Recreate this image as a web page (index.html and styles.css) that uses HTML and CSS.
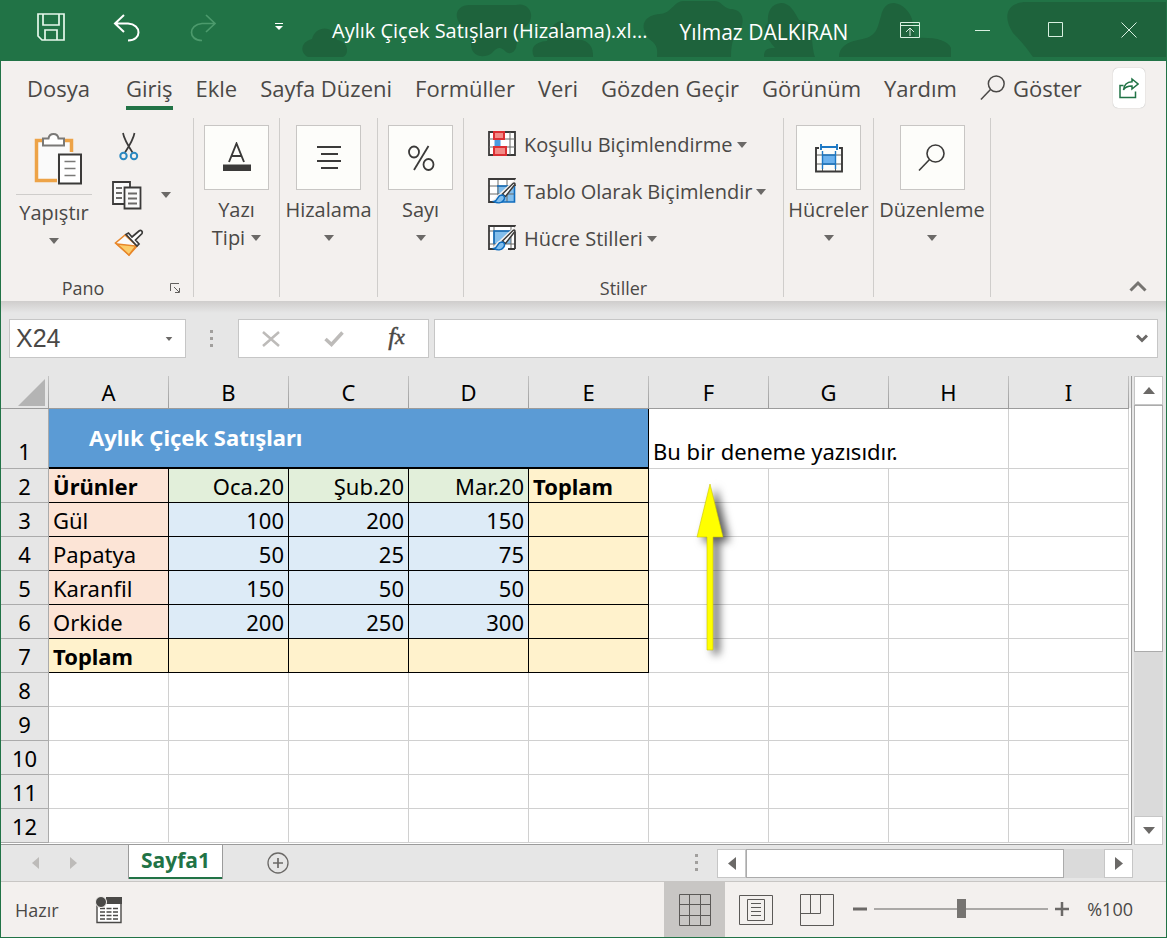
FILE: index.html
```
<!DOCTYPE html>
<html lang="tr">
<head>
<meta charset="utf-8">
<title>Aylık Çiçek Satışları (Hizalama)</title>
<link rel="stylesheet" href="styles.css">
</head>
<body>
<svg class="defs" aria-hidden="true">
  <symbol id="caret" viewBox="0 0 10 6"><path d="M0 0h10L5 6z" fill="currentColor"/></symbol>
  <symbol id="lens" viewBox="0 0 28 28"><g fill="none" stroke="currentColor" stroke-width="1.6"><circle cx="17.5" cy="9.5" r="8.5"/><path d="M11.3 15.7 1 26.5"/></g></symbol>
  <symbol id="brush" viewBox="0 0 28 28"><path d="M8 25.500C12 26 16 25 17.500 20L28 7V2L24 5 11 17C8 18 8 22 4 23z" fill="#f3f0ee"/><path d="M14.500 17 25 6.500c1.500-1 2.500 0 1.500 1.500L17.500 19.500z" fill="#fff" stroke="#3b3a39" stroke-width="1.500"/><path d="M6 24.500c4-.5 3-6 7.500-6.500 3 0 4 3 2 5.500-2 2.500-6 3-9.500 1z" fill="#83beec" stroke="#0f6cbd" stroke-width="1.500"/></symbol>
</svg>
<div class="window">
  <header class="titlebar">
    <svg class="clouds" viewBox="0 0 1167 61" preserveAspectRatio="xMaxYMin slice" aria-hidden="true">
      <g fill="#1e633c">
        <path d="M309 57c-8-4-8-15 4-18 4-14 22-14 25 1 11 1 13 14 6 17z"/>
        <path d="M462 25c-9-10-3-21 10-20h45c11-3 18 7 14 16-4 8-12 8-12 15l-2 12c-3 7-9 6-12 2-6-4-8-1-12 3-8 6-21 4-21-9 0-7-2-12-10-19z"/>
        <path d="M535 57c-4-9 0-15 13-16 3-9 4-18 14-20 9 1 9 12 14 19 12-2 19 6 18 17z"/>
        <path d="M658 57c1-10-1-13-8-18-11-14-4-24 11-25 12-1 13-12 23-13h31c8 0 9 7 16 8 12 0 15 10 11 19-6 6-10 12-10 29z"/>
        <path d="M765 57c0-7 2-9 11-9-10-12-13-20-7-25-1-11 3-19 13-20 9 0 13 8 18 17 9 0 13 4 13 13 0 10 1 19 3 24z"/>
        <path d="M840 57c0-9 7-15 19-17 20-3 19-12 23-24 2-9 6-13 13-13 9 1 15 8 18 16l3 19c19-1 33 2 36 10v9z"/>
        <path d="M1034 57c-5-7-11-15-20-24-11-17-6-31 14-31h139v55z"/>
      </g>
    </svg>
    <div class="quick">
      <button class="tb" aria-label="Kaydet"><svg width="30" height="30" viewBox="0 0 30 30" fill="none" stroke="#e6f8ec" stroke-width="1.700"><path d="M2 2h26v26H6l-4-4zM7 2v11h16V2M9 28V18h12v10"/></svg></button>
      <button class="tb" aria-label="Geri al"><svg width="28" height="30" viewBox="0 0 28 30" fill="none" stroke="#fff" stroke-width="2"><path d="M11 3 2 11.500l9 8.500M2 11.500h13c14 1 14 17 0 17"/></svg></button>
      <button class="tb dim" aria-label="Yinele"><svg width="28" height="30" viewBox="0 0 28 30" fill="none" stroke="#4c9a6c" stroke-width="1.700"><path d="M17 3l9 8.500-9 8.500M26 11.500H13c-14 1-14 17 0 17"/></svg></button>
      <button class="tb" aria-label="Özelleştir"><svg width="10" height="8" viewBox="0 0 10 8" fill="#fff"><path d="M1 0h8v1H1zM1 3h8L5 7z"/></svg></button>
    </div>
    <h1 class="doc">Aylık Çiçek Satışları (Hizalama).xl...</h1>
    <span class="user">Yılmaz DALKIRAN</span>
    <div class="winctl">
      <button class="tb" aria-label="Şerit görüntüleme"><svg width="20" height="16" viewBox="0 0 20 16" fill="none" stroke="#d9f0e1"><path d="M.5.500h19v15H.5zM.5 3.500h19M10 14V6M6 10l4-4 4 4"/></svg></button>
      <button class="tb" aria-label="Simge durumuna küçült"><svg width="16" height="16" viewBox="0 0 16 16" stroke="#d9f0e1"><path d="M0 8.500h15"/></svg></button>
      <button class="tb" aria-label="Ekranı kapla"><svg width="16" height="16" viewBox="0 0 16 16" fill="none" stroke="#d9f0e1"><path d="M.5.500h14v14H.5z"/></svg></button>
      <button class="tb" aria-label="Kapat"><svg width="16" height="16" viewBox="0 0 16 16" stroke="#d9f0e1"><path d="M.5.500l15 15M15.500.500l-15 15"/></svg></button>
    </div>
  </header>

  <nav class="tabs">
    <button class="tab file">Dosya</button>
    <button class="tab active">Giriş</button>
    <button class="tab">Ekle</button>
    <button class="tab">Sayfa Düzeni</button>
    <button class="tab">Formüller</button>
    <button class="tab">Veri</button>
    <button class="tab">Gözden Geçir</button>
    <button class="tab">Görünüm</button>
    <button class="tab">Yardım</button>
    <button class="tab tell"><svg width="26" height="26"><use href="#lens"/></svg>Göster</button>
    <button class="share" aria-label="Paylaş"><svg width="20" height="22" viewBox="0 0 20 22" fill="none" stroke="#217346" stroke-width="1.500"><path d="M4.500 8.500H1v12h15.500v-6M13 2l6 5-6 5V9C9 9 6 10 4.500 13 5 8 8 5 13 4.800z"/></svg></button>
  </nav>

  <section class="ribbon">
    <div class="group pano">
      <div class="body">
        <button class="paste">
          <span class="pasteicon"><svg width="50" height="54" viewBox="0 0 50 54"><path d="M3.500 8.500h35v14h-14v25h-21z" fill="#fafafa"/><path d="M10 8.500H3.500v40H24M32 8.500h6.500V20" fill="none" stroke="#eda347" stroke-width="3.500"/><path d="M10 13.500V6.500h5.500c1-6 9-6 10 0H31v7z" fill="#fff" stroke="#7a7977" stroke-width="2"/><path d="M26 22.500h22v29H26z" fill="#fff" stroke="#3b3a39" stroke-width="2"/><path d="M31.500 29.500h11M31.500 36.500h11M31.500 43.500h11" stroke="#7a7977" stroke-width="1.500"/></svg></span>
          <span class="pastetext">Yapıştır</span>
          <svg class="caret"><use href="#caret"/></svg>
        </button>
        <div class="clip">
          <button aria-label="Kes"><svg width="20" height="30" viewBox="0 0 20 30" fill="none"><path d="M4 1c1 6 4 11 9.500 19.500M15.500 1c-1 6-4 11-9.500 19.500" stroke="#3b3a39" stroke-width="1.700"/><circle cx="4.500" cy="24" r="3.200" stroke="#2b88c0" stroke-width="2"/><circle cx="15" cy="24" r="3.200" stroke="#2b88c0" stroke-width="2"/></svg></button>
          <span></span>
          <button aria-label="Kopyala"><svg width="30" height="30" viewBox="0 0 30 30" fill="#fafafa" stroke="#3b3a39" stroke-width="1.800"><path d="M10 24H-1V2h17v5"/><path d="M10.500 7.500h16v21h-16z"/><path d="M2 8h6M2 13h6M2 18h6M14 13.500h9M14 18.500h9M14 23.500h9" stroke="#6b6a68"/></svg></button>
          <button aria-label="Kopyalama seçenekleri"><svg class="caret"><use href="#caret"/></svg></button>
          <button aria-label="Biçim boyacısı"><svg width="30" height="28" viewBox="0 0 30 28"><path d="M11 6 1.500 14 15 26l8-9z" fill="#fafafa" stroke="#e8872a" stroke-width="1.600"/><path d="M3 15l19 2-7 9z" fill="#fbcd6b" stroke="#e8872a" stroke-width="1.400"/><path d="M12 5.500 23 17l2-2-3.500-4L28 4.500c1-2-1-4-3-2.500L18 8l-3.500-4z" fill="#fff" stroke="#3b3a39" stroke-width="1.700"/></svg></button>
        </div>
      </div>
      <div class="foot"><span>Pano</span><button class="launch" aria-label="Pano ayarları"><svg width="10" height="10" viewBox="0 0 10 10" fill="none" stroke="#605e5c"><path d="M.5 8V.500H9M4 4l5 5M9.500 5v4.500H5"/></svg></button></div>
    </div>
    <div class="group font">
      <button class="big"><span class="tile"><svg width="30" height="32" viewBox="0 0 30 32"><path d="M7 20 14.500 1.500 22 20M9.500 14h10" fill="none" stroke="#3b3a39" stroke-width="1.900"/><path d="M1 22.500h28V29H1z" fill="#3b3a39"/></svg></span><span>Yazı</span><span>Tipi <svg class="caret"><use href="#caret"/></svg></span></button>
    </div>
    <div class="group align">
      <button class="big"><span class="tile"><svg width="26" height="26" viewBox="0 0 26 26" stroke="#3b3a39" stroke-width="2"><path d="M1 2h24M5 9h17M1 16h24M5 23h17"/></svg></span><span>Hizalama</span><span><svg class="caret"><use href="#caret"/></svg></span></button>
    </div>
    <div class="group number">
      <button class="big"><span class="tile"><svg width="28" height="28" viewBox="0 0 28 28" fill="none" stroke="#3b3a39" stroke-width="1.800"><ellipse cx="7" cy="8" rx="5" ry="5.500"/><ellipse cx="21.500" cy="20.500" rx="5" ry="5.500"/><path d="M21.500 2 7 26"/></svg></span><span>Sayı</span><span><svg class="caret"><use href="#caret"/></svg></span></button>
    </div>
    <div class="group styles">
      <div class="body list">
        <button class="line"><svg width="28" height="28" viewBox="0 0 28 28"><path d="M1 2h26v23H1z" fill="#fff" stroke="#3b3a39" stroke-width="1.800"/><path d="M1 9h26M1 17h26M8 2v23M22 2v23" stroke="#6b6a68" fill="none"/><path d="M6.500 9.500h6v7h-6z" fill="#4a9be0"/><path d="M6 2h10v7H6zM6 17h12v8H6z" fill="#f28b87" stroke="#dc2f33" stroke-width="2"/></svg>Koşullu Biçimlendirme<svg class="caret"><use href="#caret"/></svg></button>
        <button class="line"><svg width="28" height="28" viewBox="0 0 28 28"><path d="M1 2h26v23H1z" fill="#fff"/><path d="M9 9h18v16H9z" fill="#83beec"/><path d="M1 9h26M1 17h26M10 2v23M19 2v23" stroke="#6b6a68" fill="none"/><path d="M9 9h17.500v16H9" fill="none" stroke="#0f6cbd" stroke-width="1.600"/><path d="M27 9V2H1v23h6" fill="none" stroke="#3b3a39" stroke-width="1.800"/><use href="#brush"/></svg>Tablo Olarak Biçimlendir<svg class="caret"><use href="#caret"/></svg></button>
        <button class="line"><svg width="28" height="28" viewBox="0 0 28 28"><path d="M1 2h26v23H1z" fill="#fff"/><path d="M6 7h17v13H6z" fill="#83beec"/><path d="M1 7h26M1 20h26M6 2v23M23 2v23" stroke="#6b6a68" fill="none"/><path d="M6 20V7h17" fill="none" stroke="#0f6cbd" stroke-width="1.600"/><path d="M27 25V2H1v23h6M20 25h7" fill="none" stroke="#3b3a39" stroke-width="1.800"/><use href="#brush"/></svg>Hücre Stilleri<svg class="caret"><use href="#caret"/></svg></button>
      </div>
      <div class="foot"><span>Stiller</span></div>
    </div>
    <div class="group cells">
      <button class="big"><span class="tile"><svg width="30" height="30" viewBox="0 0 30 30" fill="none"><path d="M8 12h13v10H8z" fill="#6cb2ee"/><path d="M2 12h26M2 21h26M8.500 8v21M21.500 8v21" stroke="#5f5e5c"/><path d="M8.500 8v18M21.500 8v18M8 12h13M8 21h13" stroke="#1c78c4" stroke-width="1.400"/><path d="M5 5H2v23.500h26V5h-3" stroke="#3b3a39" stroke-width="1.900"/><path d="M7 4h16M7 1v6M23 1v6" stroke="#1c78c4" stroke-width="1.900"/></svg></span><span>Hücreler</span><span><svg class="caret"><use href="#caret"/></svg></span></button>
    </div>
    <div class="group edit">
      <button class="big"><span class="tile"><svg width="28" height="28" color="#3b3a39"><use href="#lens"/></svg></span><span>Düzenleme</span><span><svg class="caret"><use href="#caret"/></svg></span></button>
    </div>
    <button class="collapse" aria-label="Şeridi daralt"><svg width="18" height="12" viewBox="0 0 18 12" fill="none" stroke="#767471" stroke-width="3"><path d="M1.500 10.500 9 3l7.500 7.500"/></svg></button>
  </section>

  <section class="formula">
    <div class="namebox"><input type="text" value="X24" aria-label="Ad Kutusu"><button aria-label="Ad listesi"><svg class="caret small"><use href="#caret"/></svg></button></div>
    <svg class="grip" width="4" height="18" viewBox="0 0 4 18" fill="#a19f9d"><path d="M0 0h3v3H0zM0 7h3v3H0zM0 14h3v3H0z"/></svg>
    <div class="fx">
      <button aria-label="İptal"><svg width="18" height="16" viewBox="0 0 18 16" stroke="#bdbbb9" stroke-width="2.500"><path d="M1 1l16 14M17 1 1 15"/></svg></button>
      <button aria-label="Gir"><svg width="20" height="16" viewBox="0 0 20 16" fill="none" stroke="#bdbbb9" stroke-width="3.500"><path d="M1.500 8 7.500 13.500 18.500 1.500"/></svg></button>
      <button class="fn" aria-label="İşlev Ekle">f<sub>x</sub></button>
    </div>
    <div class="entry"><input type="text" aria-label="Formül Çubuğu"><button aria-label="Genişlet"><svg width="12" height="9" viewBox="0 0 12 9" fill="none" stroke="#6b6967" stroke-width="3"><path d="M1 1.500 6 6.500l5-5"/></svg></button></div>
  </section>

  <main class="work">
    <div class="sheet">
      <table>
        <colgroup><col class="rowcol"><col span="9" class="datacol"></colgroup>
        <thead><tr><th class="corner"><svg width="27" height="27" viewBox="0 0 27 27"><path d="M27 0v27H0z" fill="#b4b4b4"/></svg></th><th>A</th><th>B</th><th>C</th><th>D</th><th>E</th><th>F</th><th>G</th><th>H</th><th>I</th></tr></thead>
        <tbody>
          <tr class="tall"><th>1</th><td colspan="5" class="title">Aylık Çiçek Satışları</td><td colspan="3">Bu bir deneme yazısıdır.</td><td></td></tr>
          <tr><th>2</th><td class="peach bold">Ürünler</td><td class="green num">Oca.20</td><td class="green num">Şub.20</td><td class="green num">Mar.20</td><td class="cream bold">Toplam</td><td></td><td></td><td></td><td></td></tr>
          <tr><th>3</th><td class="peach">Gül</td><td class="blue num">100</td><td class="blue num">200</td><td class="blue num">150</td><td class="cream"></td><td></td><td></td><td></td><td></td></tr>
          <tr><th>4</th><td class="peach">Papatya</td><td class="blue num">50</td><td class="blue num">25</td><td class="blue num">75</td><td class="cream"></td><td></td><td></td><td></td><td></td></tr>
          <tr><th>5</th><td class="peach">Karanfil</td><td class="blue num">150</td><td class="blue num">50</td><td class="blue num">50</td><td class="cream"></td><td></td><td></td><td></td><td></td></tr>
          <tr><th>6</th><td class="peach">Orkide</td><td class="blue num">200</td><td class="blue num">250</td><td class="blue num">300</td><td class="cream"></td><td></td><td></td><td></td><td></td></tr>
          <tr><th>7</th><td class="cream bold">Toplam</td><td class="cream"></td><td class="cream"></td><td class="cream"></td><td class="cream"></td><td></td><td></td><td></td><td></td></tr>
          <tr><th>8</th><td></td><td></td><td></td><td></td><td></td><td></td><td></td><td></td><td></td></tr>
          <tr><th>9</th><td></td><td></td><td></td><td></td><td></td><td></td><td></td><td></td><td></td></tr>
          <tr><th>10</th><td></td><td></td><td></td><td></td><td></td><td></td><td></td><td></td><td></td></tr>
          <tr><th>11</th><td></td><td></td><td></td><td></td><td></td><td></td><td></td><td></td><td></td></tr>
          <tr><th>12</th><td></td><td></td><td></td><td></td><td></td><td></td><td></td><td></td><td></td></tr>
        </tbody>
      </table>
      <svg class="arrow" width="60" height="190" viewBox="0 0 60 190" aria-hidden="true"><path d="M20 4l13 53H23v113h-6V57H7z" fill="#ff0" stroke="#c9c400" stroke-width=".6"/></svg>
    </div>
    <div class="vscroll">
      <button aria-label="Yukarı"><svg width="12" height="7" viewBox="0 0 12 7" fill="#6b6967"><path d="M0 7h12L6 0z"/></svg></button>
      <div class="vthumb"></div>
      <div class="space"></div>
      <button aria-label="Aşağı"><svg width="12" height="7" viewBox="0 0 12 7" fill="#6b6967"><path d="M0 0h12L6 7z"/></svg></button>
    </div>
  </main>

  <div class="sheetbar">
    <div class="sheetnav">
      <button aria-label="Önceki"><svg width="7" height="12" viewBox="0 0 7 12" fill="#bdbbb9"><path d="M7 0v12L0 6z"/></svg></button>
      <button aria-label="Sonraki"><svg width="7" height="12" viewBox="0 0 7 12" fill="#bdbbb9"><path d="M0 0v12l7-6z"/></svg></button>
    </div>
    <button class="sheettab">Sayfa1</button>
    <button class="add" aria-label="Yeni sayfa"><svg width="22" height="22" viewBox="0 0 22 22" fill="none" stroke="#6b6967"><circle cx="11" cy="11" r="10" stroke-width="1.300"/><path d="M11 6v10M6 11h10" stroke-width="1.700"/></svg></button>
    <svg class="grip end" width="4" height="18" viewBox="0 0 4 18" fill="#a19f9d"><path d="M0 0h3v3H0zM0 7h3v3H0zM0 14h3v3H0z"/></svg>
    <div class="hscroll">
      <button aria-label="Sola"><svg width="8" height="13" viewBox="0 0 8 13" fill="#6b6967"><path d="M8 0v13L0 6.500z"/></svg></button>
      <div class="hthumb"></div>
      <div class="space"></div>
      <button aria-label="Sağa"><svg width="8" height="13" viewBox="0 0 8 13" fill="#6b6967"><path d="M0 0v13l8-6.500z"/></svg></button>
    </div>
  </div>

  <footer class="status">
    <span class="ready">Hazır</span>
    <button class="macro" aria-label="Makro kaydet"><svg width="28" height="28" viewBox="0 0 28 28"><path d="M2 9v17.500h24V2H12" fill="#fff" stroke="#4a4947" stroke-width="1.400"/><path d="M11 1h16v7H11z" fill="#4a4947"/><path d="M5 12.500h18M5 16h18M5 19.500h18M5 23h18" stroke="#4a4947" stroke-width="1.400" stroke-dasharray="5 1.500"/><circle cx="6" cy="6" r="5.500" fill="#4a4947" stroke="#f3f0ee"/></svg></button>
    <div class="views">
      <button class="on" aria-label="Normal"><svg width="32" height="32" viewBox="0 0 32 32" fill="none" stroke="#5b5957"><path d="M.5.500h31v31H.5zM10.500.500v31M21.500.500v31M.5 10.500h31M.5 21.500h31"/></svg></button>
      <button aria-label="Sayfa Düzeni"><svg width="34" height="30" viewBox="0 0 34 30" fill="none" stroke="#5b5957"><path d="M.5.500h33v29H.5zM8.500 4.500h17v21h-17zM12 8.500h10M12 12.500h10M12 16.500h10M12 20.500h10"/></svg></button>
      <button aria-label="Sayfa Sonu Önizleme"><svg width="34" height="32" viewBox="0 0 34 32" fill="none" stroke="#5b5957"><path d="M.5.500h33v31H.5zM10.500.500v19M20.500.500v19H.5"/></svg></button>
    </div>
    <div class="zoom">
      <button aria-label="Uzaklaştır"><svg width="16" height="16" viewBox="0 0 16 16" stroke="#6b6967" stroke-width="3"><path d="M1 8h14"/></svg></button>
      <input type="range" min="0" max="100" value="50" aria-label="Yakınlaştırma">
      <button aria-label="Yakınlaştır"><svg width="16" height="16" viewBox="0 0 16 16" stroke="#6b6967" stroke-width="2.500"><path d="M1 8h14M8 1v14"/></svg></button>
      <span class="pct">%100</span>
    </div>
  </footer>
</div>
</body>
</html>
```
FILE: styles.css
```
* { box-sizing: border-box; }
body { margin: 0; font-family: "Open Sans", "Noto Sans", sans-serif; color: #4a4846; }
button, input { font: inherit; color: inherit; }
button { margin: 0; padding: 0; border: 0; background: none; display: flex; align-items: center; justify-content: center; white-space: nowrap; }
svg { display: block; flex: none; }
.defs { position: absolute; width: 0; height: 0; }
.window { display: flex; flex-direction: column; min-height: 100vh; border: solid #217346; border-width: 0 1px 1px; background: #e6e6e6; }
.caret { display: inline-block; width: 10px; height: 6px; color: #6b6967; vertical-align: middle; }

/* title bar */
.titlebar { position: relative; display: flex; align-items: center; height: 61px; background: #217346; color: #fff; overflow: hidden; }
.clouds { position: absolute; top: 0; right: 0; width: 100%; height: 61px; }
.titlebar > :not(.clouds) { position: relative; }
.quick { display: flex; width: 331px; padding: 0 2px 8px 12px; }
.quick .tb { width: 76px; height: 48px; flex: none; }
.doc { margin: 0; font-size: 20px; font-weight: 400; white-space: nowrap; }
.user { margin-left: 32px; padding-top: 2px; font-size: 21px; white-space: nowrap; }
.winctl { display: flex; margin-left: auto; padding: 0 1px 2px 0; }
.winctl .tb { width: 73px; height: 56px; }

/* tabs */
.tabs { display: flex; align-items: center; gap: 23px; height: 54px; padding: 0 21px 0 26px; background: #f3f0ee; font-size: 22px; }
.tab { height: 44px; padding: 5px 0 1px; border-bottom: 4px solid transparent; line-height: 34px; }
.tab.file { margin-right: 13px; }
.tab.active { border-bottom-color: #217346; }
.tab.tell { gap: 7px; }
.share { width: 32px; height: 40px; margin-left: auto; border-radius: 5px; background: #fff; box-shadow: 0 0 1px #999; }

/* ribbon */
.ribbon { display: flex; height: 186px; padding: 3px 0 4px; background: #f3f0ee; font-size: 20px; }
.group { display: flex; flex-direction: column; border-right: 1px solid #cfcdcb; }
.body { display: flex; flex: 1; padding-top: 7px; }
.foot { display: flex; justify-content: center; align-items: center; height: 18px; font-size: 18px; line-height: 18px; }
.pano { width: 193px; }
.font, .number { width: 86px; }
.align { width: 98px; }
.styles { width: 320px; }
.cells { width: 90px; }
.edit { width: 117px; }
.pano .foot { display: grid; grid-template-columns: 1fr 20px; padding-right: 8px; text-align: center; }
.paste { flex-direction: column; justify-content: flex-start; width: 76px; margin-left: 15px; }
.pasteicon { display: flex; justify-content: center; width: 76px; height: 70px; padding: 7px 0 0 8px; border-bottom: 1px solid #cfcdcb; }
.pastetext { line-height: 36px; }
.paste .caret { margin-top: 7px; }
.body .clip { display: grid; grid-template-columns: 46px 28px; grid-auto-rows: 48px; margin: -2px 0 0 14px; }
.clip svg { overflow: visible; }
.big { flex-direction: column; justify-content: flex-start; padding-top: 7px; line-height: 28px; }
.big > span { min-height: 28px; display: flex; align-items: center; gap: 6px; }
.big > .tile { width: 65px; height: 65px; margin-bottom: 6px; justify-content: center; border: 1px solid #c8c6c4; background: #fdfdfa; }
.list { flex-direction: column; align-items: flex-start; padding: 3px 0 0 24px; }
.line { height: 47px; gap: 8px; }
.line > svg:first-child { margin-bottom: 2px; }
.line .caret { margin-left: -4px; }
.collapse { margin: auto 19px 5px auto; }

/* formula bar */
.formula { display: flex; align-items: center; height: 75px; padding: 0 8px; background: linear-gradient(#cfcdcc, #e6e6e6 12px); }
.namebox, .fx, .entry { display: flex; height: 39px; border: 1px solid #c6c6c6; background: #fff; }
.namebox { width: 177px; }
.namebox input, .entry input { flex: 1; min-width: 0; padding: 0 6px; border: 0; background: none; }
.namebox input { font-family: "Liberation Sans", Arial, sans-serif; font-size: 25px; }
.namebox button { width: 32px; }
.caret.small { width: 8px; height: 4px; }
.grip { margin: 0 24px; }
.fx { width: 191px; }
.fx button { flex: 1; }
.fx .fn { font-family: "Liberation Serif", serif; font-style: italic; font-size: 25px; line-height: 30px; color: #4a4846; -webkit-text-stroke: 0.5px; padding-bottom: 3px; }
.fn sub { font-size: 22px; vertical-align: baseline; }
.entry { flex: 1; margin-left: 5px; }
.entry button { width: 30px; }

/* sheet */
.work { display: flex; flex: 1; min-height: 0; }
.sheet { position: relative; flex: 1; min-width: 0; margin-right: 2px; overflow: hidden; border: solid #9b9b9b; border-width: 0 1px 1px 0; background: linear-gradient(#e6e6e6 32px, #fff 32px); }
table { table-layout: fixed; width: 1128px; border-collapse: separate; border-spacing: 0; font: 22px/30px "Noto Sans", "Open Sans", sans-serif; color: #000; }
.rowcol { width: 48px; }
.datacol { width: 120px; }
th { padding: 0 0 1px; border: solid #ababab; border-width: 0 1px 1px 0; background: #e6e6e6; font-weight: 400; vertical-align: bottom; }
thead th { height: 33px; border-color: #9b9b9b; border-image: linear-gradient(#c4c4c4, #9b9b9b) 1; }
.corner svg { margin: 0 3px 1px auto; }
td { height: 34px; padding: 0 4px 1px; border: solid #d0d0d0; border-width: 0 1px 1px 0; vertical-align: bottom; white-space: nowrap; }
.tall td, .tall th { height: 60px; padding-bottom: 2px; }
.tall .title { padding-left: 40px; vertical-align: middle; border-color: #000; border-bottom-width: 2px; background: #5b9bd5; color: #fff; font-weight: 700; }
.peach, .green, .blue, .cream { border-color: #000; }
.peach { background: #fce4d6; }
.green { background: #e2efda; }
.blue { background: #ddebf7; }
.cream { background: #fff2cc; }
.bold { font-weight: 700; }
.num { text-align: right; }
.arrow { position: absolute; left: 689px; top: 104px; filter: drop-shadow(6px 4px 4px rgba(0, 0, 0, .65)); }

/* scroll bars */
.vscroll { display: flex; flex-direction: column; width: 29px; margin-right: 3px; }
.vscroll button, .hscroll button { width: 29px; height: 29px; border: 1px solid #c6c6c6; background: #fff; }
.vthumb { height: 247px; border: 1px solid #ababab; background: #fff; }
.space { flex: 1; background: #dadada; }
.hscroll { display: flex; flex: 0 1 416px; height: 29px; margin-right: 33px; }
.hthumb { width: 318px; border: 1px solid #ababab; background: #fff; }

/* sheet tabs */
.sheetbar { display: flex; align-items: center; height: 36px; }
.sheetnav { display: flex; width: 127px; padding-left: 15px; }
.sheetnav button { width: 38px; height: 30px; }
.sheettab { align-self: flex-start; width: 95px; height: 34px; padding-bottom: 4px; border: solid #9b9b9b; border-width: 0 1px; background: #fff; box-shadow: inset 0 -2px #217346; color: #217346; font-size: 21px; font-weight: 700; line-height: 30px; }
.add { margin-left: 44px; }
.grip.end { margin: 0 18px 0 auto; }

/* status bar */
.status { display: flex; align-items: center; height: 56px; padding-bottom: 0; border-top: 1px solid #c8c6c4; background: #f3f0ee; font-size: 18px; }
.ready { width: 94px; padding-left: 14px; }
.views { display: flex; align-self: stretch; margin-left: auto; }
.views button { width: 61px; }
.views .on { background: #c8c6c4; }
.zoom { display: flex; align-items: center; gap: 6px; padding: 0 33px 2px 5px; }
.zoom input { width: 174px; height: 20px; margin: 0; appearance: none; background: linear-gradient(#aaa8a6, #aaa8a6) center / 100% 2px no-repeat; }
.zoom input::-webkit-slider-thumb { appearance: none; width: 9px; height: 19px; background: #767471; }
.pct { margin-left: 11px; }
```
